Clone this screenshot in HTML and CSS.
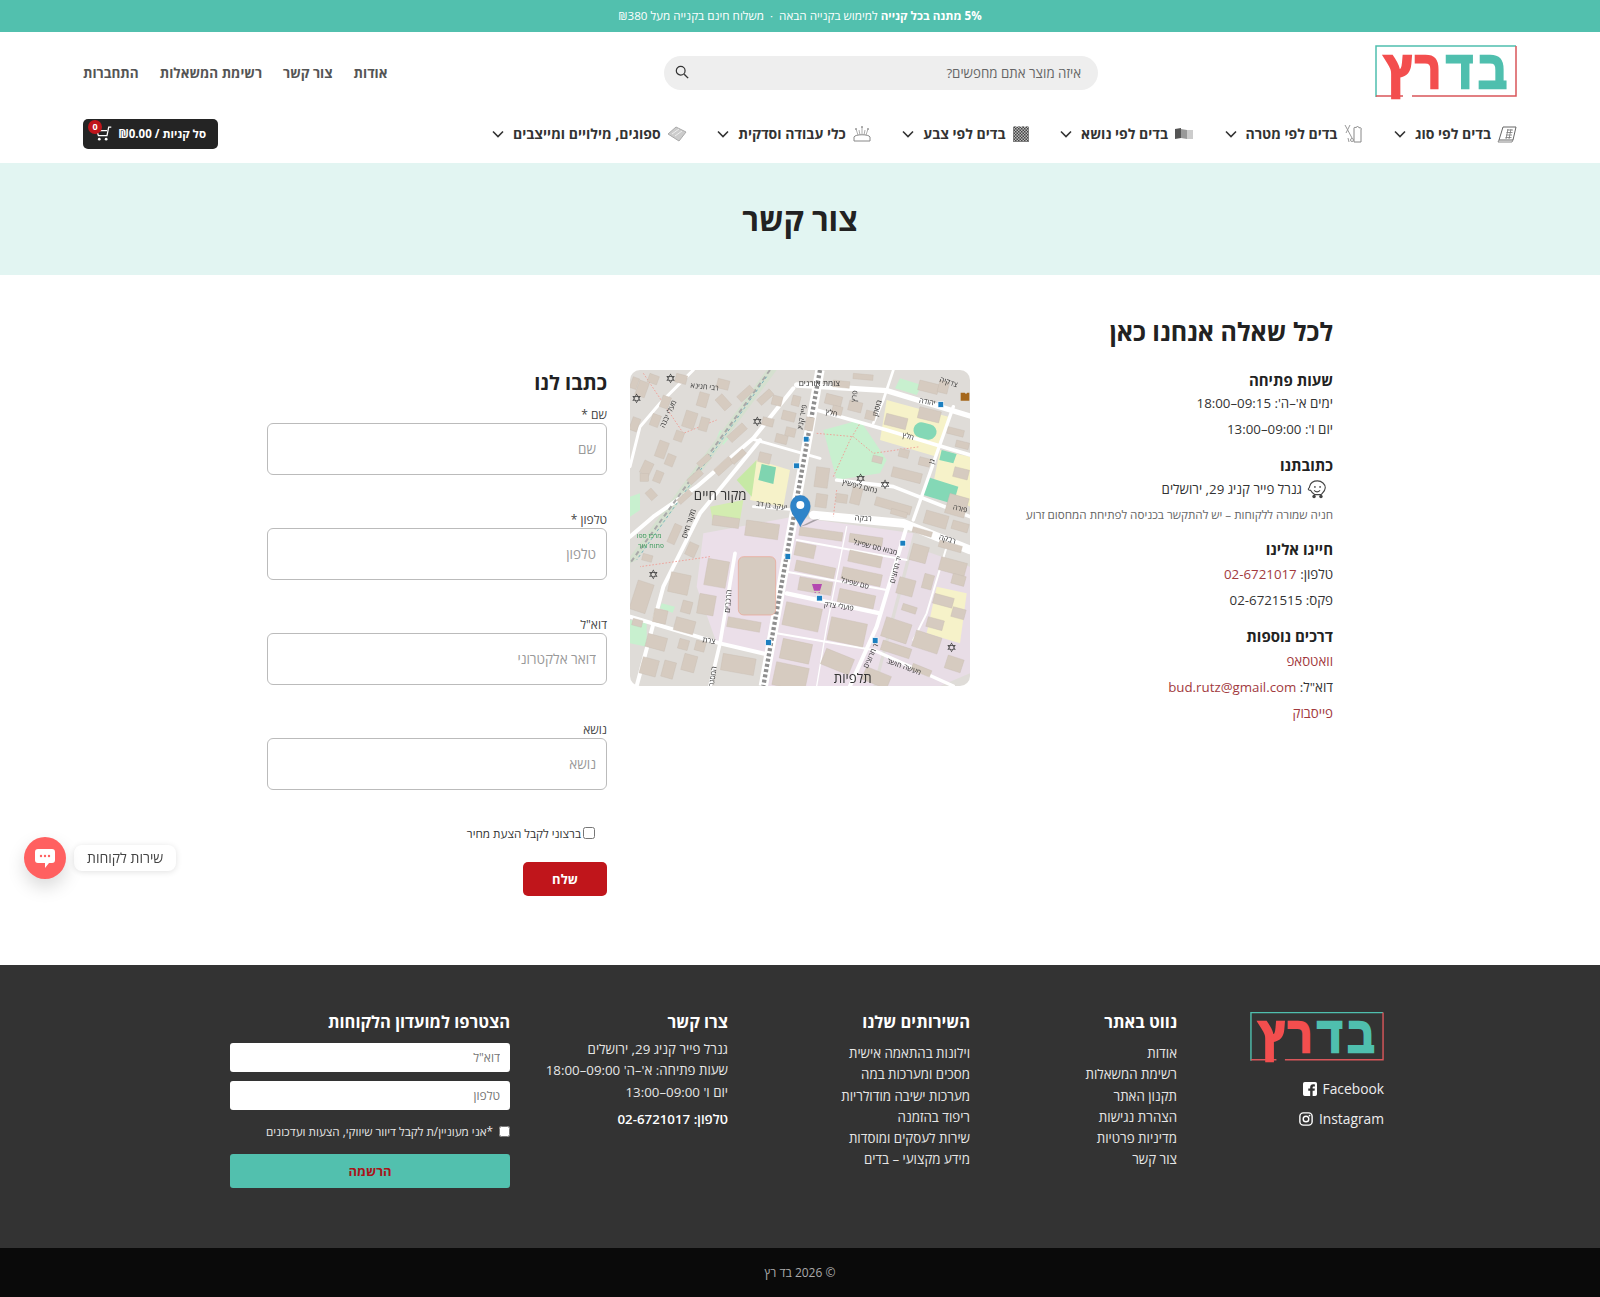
FILE: index.html
```html
<!DOCTYPE html>
<html lang="he" dir="rtl">
<head>
    <meta charset="UTF-8">
    <meta name="viewport" content="width=device-width, initial-scale=1.0">
    <title>צור קשר - בד רץ</title>
    <link rel="stylesheet" href="styles.css">
</head>
<body>
    <div class="topbar"><b>5% מתנה בכל קנייה</b> למימוש בקנייה הבאה &nbsp;·&nbsp; משלוח חינם בקנייה מעל ₪380</div>

    <header class="header">
        <div class="header-main">
            <a class="logo" href="#">
                <svg viewBox="0 -6 142 62" width="142" height="62">
                    <path d="M1 52V1H141" stroke="#4fbfae" stroke-width="1.500" fill="none"/>
                    <path d="M1 51H28M37 51H141V1" stroke="#d9565a" stroke-width="1.500" fill="none"/>
                    <g class="logo-word" font-size="52" stroke-width="2.600">
                        <text x="103" y="43" textLength="29" lengthAdjust="spacingAndGlyphs" fill="#4fbfae" stroke="#4fbfae">ב</text>
                        <text x="71" y="43" textLength="27" lengthAdjust="spacingAndGlyphs" fill="#4fbfae" stroke="#4fbfae">ד</text>
                        <text x="40" y="43" textLength="26" lengthAdjust="spacingAndGlyphs" fill="#f34e4e" stroke="#f34e4e">ר</text>
                        <text x="9" y="43" textLength="28" lengthAdjust="spacingAndGlyphs" fill="#f34e4e" stroke="#f34e4e">ץ</text>
                    </g>
                </svg>
            </a>
            <form class="search">
                <input class="search-input" type="text" placeholder="איזה מוצר אתם מחפשים?">
                <svg class="search-icon" viewBox="0 0 16 16" width="14" height="14"><circle cx="6.500" cy="6.500" r="5" fill="none" stroke="#333" stroke-width="1.400"/><path d="M10.500 10.500l4.500 4.500" stroke="#333" stroke-width="1.600"/></svg>
            </form>
            <nav class="top-links">
                <a href="#">אודות</a>
                <a href="#">צור קשר</a>
                <a href="#">רשימת המשאלות</a>
                <a href="#">התחברות</a>
            </nav>
        </div>
        <div class="header-nav">
            <nav class="cats">
                <a class="cat" href="#">
                    <svg viewBox="0 0 20 18" width="20" height="18"><path d="M6 2h13l-3 13H2z" fill="#fff" stroke="#666"/><path d="M2 15l-1 2h14l1-2" fill="none" stroke="#888"/><path d="M10 5h6M9.500 7.500h6M9 10h6M8.500 12.500h6M11 4l-2 10M14 4l-2 10" stroke="#777" stroke-width=".8"/></svg>
                    בדים לפי סוג
                    <svg class="chev" viewBox="0 0 12 8" width="12" height="8"><path d="M1 1.500l5 5 5-5" fill="none" stroke="#333" stroke-width="1.600"/></svg>
                </a>
                <a class="cat" href="#">
                    <svg viewBox="0 0 20 20" width="20" height="20"><path d="M11 9V4c0-1 2-1 2 0 0-2 3-2 3 0 1-1 3 0 2 2v12h-7z" fill="#fff" stroke="#888"/><path d="M2 1l7 13M7 1L3 9M5 14l1 4" fill="none" stroke="#999"/><circle cx="9" cy="16" r="1.500" fill="none" stroke="#999"/></svg>
                    בדים לפי מטרה
                    <svg class="chev" viewBox="0 0 12 8" width="12" height="8"><path d="M1 1.500l5 5 5-5" fill="none" stroke="#333" stroke-width="1.600"/></svg>
                </a>
                <a class="cat" href="#">
                    <svg viewBox="0 0 20 14" width="20" height="14"><path d="M1 2l6-1v10l-6 1z" fill="#555"/><path d="M7 2l6 1v9l-6-1z" fill="#999"/><path d="M13 3h6v9h-6z" fill="#ccc"/></svg>
                    בדים לפי נושא
                    <svg class="chev" viewBox="0 0 12 8" width="12" height="8"><path d="M1 1.500l5 5 5-5" fill="none" stroke="#333" stroke-width="1.600"/></svg>
                </a>
                <a class="cat" href="#">
                    <svg viewBox="0 0 18 18" width="18" height="18"><defs><pattern id="chk" width="3" height="3" patternUnits="userSpaceOnUse"><path d="M0 0h1.500v1.500H0zM1.500 1.500H3V3H1.500z" fill="#444"/></pattern></defs><path d="M1 2l2-1 2 1 2-1 2 1 2-1 2 1 2-1 2 1v15H1z" fill="#bbb"/><path d="M1 2l2-1 2 1 2-1 2 1 2-1 2 1 2-1 2 1v15H1z" fill="url(#chk)"/></svg>
                    בדים לפי צבע
                    <svg class="chev" viewBox="0 0 12 8" width="12" height="8"><path d="M1 1.500l5 5 5-5" fill="none" stroke="#333" stroke-width="1.600"/></svg>
                </a>
                <a class="cat" href="#">
                    <svg viewBox="0 0 20 18" width="20" height="18"><path d="M2 12c1-3 15-3 16 0v4H2z" fill="#fff" stroke="#888"/><path d="M6 10L4 4M10 9V2M14 10l2-6M8 10L7 5M12 10l1-5" stroke="#999" stroke-width=".8"/><circle cx="4" cy="4" r="1" fill="#999"/><circle cx="10" cy="2" r="1" fill="#999"/><circle cx="16" cy="4" r="1" fill="#999"/></svg>
                    כלי עבודה וסדקית
                    <svg class="chev" viewBox="0 0 12 8" width="12" height="8"><path d="M1 1.500l5 5 5-5" fill="none" stroke="#333" stroke-width="1.600"/></svg>
                </a>
                <a class="cat" href="#">
                    <svg viewBox="0 0 20 16" width="20" height="16"><path d="M1 8l8-7 10 5-7 9z" fill="#ccc" stroke="#aaa"/><path d="M5 8l7-5M8 10l7-5" stroke="#eee"/></svg>
                    ספוגים, מילויים ומייצבים
                    <svg class="chev" viewBox="0 0 12 8" width="12" height="8"><path d="M1 1.500l5 5 5-5" fill="none" stroke="#333" stroke-width="1.600"/></svg>
                </a>
            </nav>
            <a class="cart" href="#">
                <span class="cart-text">סל קניות / ₪0.00</span>
                <svg viewBox="0 0 20 18" width="18" height="16"><path d="M19 1h-3l-2 10H4L2 5h12" fill="none" stroke="#fff" stroke-width="1.500"/><circle cx="5" cy="15" r="1.600" fill="#fff"/><circle cx="13" cy="15" r="1.600" fill="#fff"/></svg>
                <i class="cart-count">0</i>
            </a>
        </div>
    </header>

    <section class="hero"><h1>צור קשר</h1></section>

    <main class="contact">
        <h2>לכל שאלה אנחנו כאן</h2>
        <div class="contact-grid">
            <div class="info">
                <h3>שעות פתיחה</h3>
                <p>ימים א'–ה': 09:15–18:00</p>
                <p>יום ו': 09:00–13:00</p>
                <h3>כתובתנו</h3>
                <p class="address">
                    <svg viewBox="0 0 24 22" width="21" height="19"><path d="M4 12c-2 0-3-1-2.500-2C3 9 3 8 3 7c1-4 5-6 9-6 5 0 9 4 9 8 0 4-3 6-5 8H9c-2-1-4-3-5-5z" fill="#fff" stroke="#444" stroke-width="1.300"/><circle cx="9" cy="8" r="1" fill="#444"/><circle cx="15" cy="8" r="1" fill="#444"/><path d="M8 12c2 2 5 2 7 0" fill="none" stroke="#444" stroke-width="1.200"/><circle cx="8" cy="19" r="2" fill="#444"/><circle cx="16" cy="19" r="2" fill="#444"/></svg>
                    גנרל פייר קניג 29, ירושלים
                </p>
                <p class="note">חניה שמורה ללקוחות – יש להתקשר בכניסה לפתיחת המחסום זרוע</p>
                <h3>חייגו אלינו</h3>
                <p>טלפון: <a href="#">02-6721017</a></p>
                <p>פקס: 02-6721515</p>
                <h3>דרכים נוספות</h3>
                <p><a href="#">וואטסאפ</a></p>
                <p>דוא"ל: <a href="#">bud.rutz@gmail.com</a></p>
                <p><a href="#">פייסבוק</a></p>
            </div>

            <div class="map">
                <svg viewBox="30 30 1020 948" width="340" height="316" preserveAspectRatio="none">
                    <rect x="30" y="30" width="1020" height="948" fill="#dfdcd8"/>
                    <!-- land use -->
                    <path d="M250 520L520 470 880 520 760 978H440L430 880 290 850 230 680z" fill="#ebdfe9"/>
                    <path d="M880 560L1050 620V940L960 978H770z" fill="#e8dde6"/>
                    <path d="M800 120L985 170 950 290 780 240z" fill="#f6f2c9"/>
                    <path d="M410 300L510 330 490 440 390 420z" fill="#f6f2c9"/>
                    <path d="M950 680L1040 700 1020 850 920 820z" fill="#f6f2c9"/>
                    <path d="M960 270L1050 290V440L940 370z" fill="#f6f2c9"/>
                    <path d="M610 210L720 180 800 300 780 340 650 360z" fill="#c8f0cf"/>
                    <path d="M350 360L410 300 395 410z" fill="#c6e9a5"/>
                    <path d="M270 440L370 420 360 480 280 490z" fill="#d3ecb0"/>
                    <path d="M30 780L80 790V860L30 850z" fill="#c8f0cf"/>
                    <path d="M30 410L60 400V450L30 470z" fill="#c8f0cf"/>
                    <path d="M300 210L335 225 310 255 290 235z" fill="#c8f0cf"/>
                    <path d="M425 312L468 322 460 372 415 360z" fill="#7fd4b0"/>
                    <rect x="880" y="190" width="70" height="46" rx="23" fill="#84d8b6" transform="rotate(14 915 213)"/>
                    <path d="M965 270L1010 282 1000 310 958 300z" fill="#84d8b6"/>
                    <path d="M925 352L1015 380 1000 432 910 405z" fill="#84d8b6"/>
                    <path d="M840 55L905 75 890 105 825 85z" fill="#c8f0cf"/>
                    <path d="M125 730L165 740 158 758 120 745z" fill="#c8f0cf"/>
                    <!-- strip along the old railway -->
                    <path d="M440 30H470L50 600 30 610V590z" fill="#d5e0cf"/>
                    <!-- roads -->
                    <g fill="none" stroke="#fff" stroke-linecap="round" stroke-linejoin="round">
                        <path d="M530 75L800 92 1050 168" stroke-width="16"/>
                        <path d="M590 150L800 210 1050 285" stroke-width="11"/>
                        <path d="M400 238L600 295" stroke-width="9"/>
                        <path d="M650 360L820 380 1050 470" stroke-width="11"/>
                        <path d="M520 85L400 235 230 380 100 470 30 530" stroke-width="12"/>
                        <path d="M220 30L120 130 60 200 30 320" stroke-width="9"/>
                        <path d="M420 240L240 460 130 680 50 978" stroke-width="12"/>
                        <path d="M30 770L300 850 450 885" stroke-width="12"/>
                        <path d="M500 700L780 760" stroke-width="13"/>
                        <path d="M500 635L800 690" stroke-width="6"/>
                        <path d="M530 540L860 600" stroke-width="6"/>
                        <path d="M760 870L1000 978" stroke-width="10"/>
                        <path d="M470 820L760 870" stroke-width="6"/>
                        <path d="M860 500L770 800 690 978" stroke-width="12"/>
                        <path d="M1000 140L880 480" stroke-width="10"/>
                        <path d="M820 30L790 120 760 190" stroke-width="8"/>
                        <path d="M345 580L300 850 270 978" stroke-width="11"/>
                        <path d="M400 440L530 450" stroke-width="8"/>
                        <path d="M580 465L850 490 1050 570" stroke-width="26"/>
                        <path d="M980 560L920 760 880 840" stroke-width="6"/>
                        <path d="M600 30L430 978" stroke-width="28" stroke-linecap="butt"/>
                        <path d="M680 500L620 800 590 978" stroke-width="4"/>
                    </g>
                    <path d="M600 30L430 978" fill="none" stroke="#8f8f8f" stroke-width="13" stroke-dasharray="9 7"/>
                    <path d="M450 30L30 610" fill="none" stroke="#a9a9a9" stroke-width="6" stroke-dasharray="14 10"/>
                    <path d="M440 50L50 600" fill="none" stroke="#4a9bb0" stroke-width="2" stroke-dasharray="8 8"/>
                    <g fill="none" stroke="#f0978f" stroke-width="2.500" stroke-dasharray="5 5">
                        <path d="M590 220L700 230 760 280 900 260"/>
                        <path d="M640 350L690 240 720 190"/>
                        <path d="M650 390L640 470"/>
                        <path d="M270 590L60 620"/>
                        <path d="M70 40L190 220 290 180"/>
                    </g>
                    <!-- buildings -->
                    <g fill="#d6cbc0" stroke="#c6bbaf" stroke-width="1">
                        <rect x="295" y="55" width="36" height="28" transform="rotate(14 295 55)"/>
                        <rect x="60" y="60" width="30" height="46" transform="rotate(20 60 60)"/>
                        <rect x="200" y="150" width="36" height="50" transform="rotate(18 200 150)"/>
                        <rect x="120" y="240" width="30" height="50" transform="rotate(20 120 240)"/>
                        <rect x="75" y="300" width="30" height="40" transform="rotate(25 75 300)"/>
                        <rect x="60" y="340" width="26" height="24"/>
                        <rect x="320" y="230" width="62" height="24" transform="rotate(-42 320 230)"/>
                        <rect x="280" y="330" width="62" height="24" transform="rotate(-42 280 330)"/>
                        <rect x="200" y="360" width="50" height="20" transform="rotate(-42 200 360)"/>
                        <rect x="350" y="110" width="52" height="22" transform="rotate(-42 350 110)"/>
                        <rect x="410" y="120" width="50" height="22" transform="rotate(-42 410 120)"/>
                        <rect x="490" y="150" width="40" height="28" transform="rotate(14 490 150)"/>
                        <rect x="470" y="220" width="36" height="26" transform="rotate(14 470 220)"/>
                        <rect x="420" y="275" width="36" height="30" transform="rotate(14 420 275)"/>
                        <rect x="620" y="100" width="50" height="30" transform="rotate(14 620 100)"/>
                        <rect x="690" y="120" width="40" height="30" transform="rotate(14 690 120)"/>
                        <rect x="800" y="160" width="66" height="34" transform="rotate(14 800 160)"/>
                        <rect x="900" y="140" width="66" height="34" transform="rotate(14 900 140)"/>
                        <rect x="590" y="320" width="40" height="60" transform="rotate(8 590 320)"/>
                        <rect x="590" y="400" width="34" height="40" transform="rotate(8 590 400)"/>
                        <rect x="700" y="380" width="30" height="50" transform="rotate(14 700 380)"/>
                        <rect x="770" y="410" width="110" height="26" transform="rotate(16 770 410)"/>
                        <rect x="920" y="450" width="70" height="40" transform="rotate(16 920 450)"/>
                        <rect x="820" y="320" width="90" height="30" transform="rotate(14 820 320)"/>
                        <rect x="380" y="480" width="100" height="46" transform="rotate(8 380 480)"/>
                        <rect x="540" y="500" width="130" height="26" transform="rotate(8 540 500)"/>
                        <rect x="690" y="520" width="100" height="26" transform="rotate(8 690 520)"/>
                        <rect x="530" y="545" width="60" height="40" transform="rotate(12 530 545)"/>
                        <rect x="690" y="570" width="100" height="34" transform="rotate(12 690 570)"/>
                        <rect x="530" y="600" width="120" height="32" transform="rotate(12 530 600)"/>
                        <rect x="670" y="620" width="120" height="36" transform="rotate(12 670 620)"/>
                        <rect x="540" y="650" width="100" height="40" transform="rotate(10 540 650)"/>
                        <rect x="660" y="685" width="110" height="40" transform="rotate(12 660 685)"/>
                        <rect x="500" y="725" width="110" height="70" transform="rotate(12 500 725)"/>
                        <rect x="635" y="770" width="110" height="70" transform="rotate(12 635 770)"/>
                        <rect x="490" y="835" width="90" height="60" transform="rotate(12 490 835)"/>
                        <rect x="620" y="865" width="90" height="50" transform="rotate(22 620 865)"/>
                        <rect x="470" y="905" width="100" height="70" transform="rotate(12 470 905)"/>
                        <rect x="355" y="590" width="112" height="175" rx="16" stroke="#eca18f" stroke-width="2"/>
                        <rect x="265" y="595" width="65" height="80" transform="rotate(10 265 595)"/>
                        <rect x="240" y="700" width="50" height="60" transform="rotate(10 240 700)"/>
                        <rect x="325" y="770" width="100" height="30" transform="rotate(10 325 770)"/>
                        <rect x="310" y="880" width="100" height="50" transform="rotate(10 310 880)"/>
                        <rect x="155" y="635" width="60" height="60" transform="rotate(12 155 635)"/>
                        <rect x="105" y="745" width="40" height="40" transform="rotate(12 105 745)"/>
                        <rect x="170" y="770" width="60" height="40" transform="rotate(15 170 770)"/>
                        <rect x="55" y="660" width="50" height="90" transform="rotate(18 55 660)"/>
                        <rect x="280" y="465" width="80" height="30" transform="rotate(8 280 465)"/>
                        <rect x="85" y="820" width="60" height="40" transform="rotate(15 85 820)"/>
                        <rect x="70" y="890" width="50" height="50" transform="rotate(15 70 890)"/>
                        <rect x="880" y="550" width="50" height="50" transform="rotate(15 880 550)"/>
                        <rect x="840" y="650" width="50" height="50" transform="rotate(15 840 650)"/>
                        <rect x="800" y="770" width="80" height="60" transform="rotate(18 800 770)"/>
                        <rect x="790" y="840" width="90" height="30" transform="rotate(18 790 840)"/>
                        <rect x="890" y="810" width="80" height="50" transform="rotate(18 890 810)"/>
                        <rect x="965" y="590" width="80" height="40" transform="rotate(15 965 590)"/>
                        <rect x="945" y="700" width="60" height="30" transform="rotate(15 945 700)"/>
                        <rect x="925" y="770" width="50" height="30" transform="rotate(15 925 770)"/>
                        <rect x="740" y="920" width="80" height="40" transform="rotate(22 740 920)"/>
                        <rect x="990" y="400" width="60" height="60" transform="rotate(16 990 400)"/>
                        <rect x="900" y="60" width="60" height="30" transform="rotate(14 900 60)"/>
                        <!-- second pass, the dense blocks -->
                        <rect x="130" y="105" width="26" height="36" transform="rotate(20 130 105)"/>
                        <rect x="100" y="160" width="26" height="36" transform="rotate(20 100 160)"/>
                        <rect x="240" y="95" width="30" height="42" transform="rotate(16 240 95)"/>
                        <rect x="285" y="120" width="28" height="44" transform="rotate(-42 285 120)"/>
                        <rect x="245" y="170" width="26" height="40" transform="rotate(16 245 170)"/>
                        <rect x="145" y="280" width="26" height="34" transform="rotate(22 145 280)"/>
                        <rect x="110" y="330" width="24" height="34" transform="rotate(22 110 330)"/>
                        <rect x="330" y="300" width="50" height="18" transform="rotate(-42 330 300)"/>
                        <rect x="170" y="420" width="48" height="18" transform="rotate(-42 170 420)"/>
                        <rect x="230" y="310" width="44" height="18" transform="rotate(-42 230 310)"/>
                        <rect x="460" y="105" width="30" height="28" transform="rotate(14 460 105)"/>
                        <rect x="520" y="105" width="24" height="30" transform="rotate(14 520 105)"/>
                        <rect x="430" y="170" width="34" height="24" transform="rotate(14 430 170)"/>
                        <rect x="500" y="200" width="30" height="26" transform="rotate(14 500 200)"/>
                        <rect x="700" y="40" width="60" height="16" transform="rotate(5 700 40)"/>
                        <rect x="640" y="135" width="30" height="26" transform="rotate(14 640 135)"/>
                        <rect x="740" y="150" width="30" height="26" transform="rotate(14 740 150)"/>
                        <rect x="840" y="265" width="30" height="24" transform="rotate(14 840 265)"/>
                        <rect x="900" y="290" width="34" height="24" transform="rotate(14 900 290)"/>
                        <rect x="1000" y="480" width="50" height="26" transform="rotate(16 1000 480)"/>
                        <rect x="960" y="60" width="30" height="36" transform="rotate(14 960 60)"/>
                        <rect x="1005" y="320" width="45" height="30" transform="rotate(14 1005 320)"/>
                        <rect x="650" y="400" width="34" height="26" transform="rotate(8 650 400)"/>
                        <rect x="815" y="445" width="50" height="16" transform="rotate(16 815 445)"/>
                        <rect x="915" y="640" width="30" height="44" transform="rotate(15 915 640)"/>
                        <rect x="1000" y="640" width="40" height="30" transform="rotate(15 1000 640)"/>
                        <rect x="985" y="885" width="50" height="40" transform="rotate(18 985 885)"/>
                        <rect x="230" y="840" width="30" height="30" transform="rotate(15 230 840)"/>
                        <rect x="195" y="880" width="40" height="50" transform="rotate(15 195 880)"/>
                        <rect x="135" y="900" width="36" height="50" transform="rotate(15 135 900)"/>
                        <rect x="190" y="720" width="30" height="36" transform="rotate(15 190 720)"/>
                        <!-- third pass -->
                        <rect x="40" y="50" width="20" height="34" transform="rotate(20 40 50)"/>
                        <rect x="90" y="40" width="30" height="26" transform="rotate(20 90 40)"/>
                        <rect x="170" y="40" width="34" height="26" transform="rotate(14 170 40)"/>
                        <rect x="40" y="170" width="24" height="40" transform="rotate(20 40 170)"/>
                        <rect x="170" y="210" width="26" height="30" transform="rotate(20 170 210)"/>
                        <rect x="75" y="400" width="24" height="30" transform="rotate(-42 75 400)"/>
                        <rect x="165" y="490" width="24" height="60" transform="rotate(24 165 490)"/>
                        <rect x="210" y="545" width="30" height="40" transform="rotate(24 210 545)"/>
                        <rect x="70" y="580" width="30" height="20" transform="rotate(15 70 580)"/>
                        <rect x="180" y="835" width="30" height="30" transform="rotate(15 180 835)"/>
                        <rect x="40" y="775" width="30" height="20" transform="rotate(15 40 775)"/>
                        <rect x="640" y="60" width="50" height="20" transform="rotate(6 640 60)" fill="#d6cbc0"/>
                        <rect x="560" y="170" width="24" height="40" transform="rotate(10 560 170)"/>
                        <rect x="985" y="200" width="50" height="20" transform="rotate(14 985 200)"/>
                        <rect x="1010" y="240" width="40" height="20" transform="rotate(14 1010 240)"/>
                        <rect x="760" y="285" width="30" height="20" transform="rotate(14 760 285)"/>
                        <rect x="880" y="500" width="60" height="16" transform="rotate(16 880 500)"/>
                        <rect x="960" y="540" width="70" height="20" transform="rotate(16 960 540)"/>
                        <rect x="1000" y="740" width="40" height="30" transform="rotate(15 1000 740)"/>
                        <rect x="850" y="730" width="44" height="20" transform="rotate(18 850 730)"/>
                        <rect x="880" y="910" width="60" height="20" transform="rotate(22 880 910)"/>
                    </g>
                    <!-- labels -->
                    <g class="map-labels">
                        <text x="660" y="78" font-size="25">צומת אורנים</text>
                        <text x="650" y="170" font-size="22" transform="rotate(14 650 170)">חלץ</text>
                        <text x="880" y="240" font-size="22" transform="rotate(14 880 240)">חלץ</text>
                        <text x="945" y="137" font-size="22" transform="rotate(10 945 137)">יהודה</text>
                        <text x="295" y="92" font-size="22" transform="rotate(6 295 92)">רבי חנינא</text>
                        <text x="170" y="125" font-size="22" transform="rotate(-65 170 125)">מעלי יבנה</text>
                        <text x="380" y="420" font-size="40" fill="#666">מקור חיים</text>
                        <text x="500" y="450" font-size="22" transform="rotate(8 500 450)">יעקב בן דב</text>
                        <text x="770" y="400" font-size="22" transform="rotate(15 770 400)">נחום ליפשיץ</text>
                        <text x="755" y="484" font-size="23" transform="rotate(4 755 484)">רבקה</text>
                        <text x="1005" y="552" font-size="23" transform="rotate(16 1005 552)">רבקה</text>
                        <text x="830" y="585" font-size="22" transform="rotate(14 830 585)">מבוא סם שפיגל</text>
                        <text x="745" y="687" font-size="22" transform="rotate(14 745 687)">סם שפיגל</text>
                        <text x="700" y="752" font-size="22" transform="rotate(8 700 752)">פועלי צדק</text>
                        <text x="228" y="450" font-size="23" transform="rotate(-72 228 450)">מקור חיים</text>
                        <text x="125" y="535" font-size="21" class="map-green">מרכז ספו</text>
                        <text x="132" y="563" font-size="21" class="map-green">פתוח אור</text>
                        <text x="335" y="690" font-size="23" transform="rotate(-85 335 690)">הרכבים</text>
                        <text x="285" y="852" font-size="23" transform="rotate(8 285 852)">צרת</text>
                        <text x="900" y="945" font-size="22" transform="rotate(20 900 945)">מעשה חושב</text>
                        <text x="755" y="968" font-size="40" fill="#666">תלפיות</text>
                        <text x="845" y="590" font-size="22" transform="rotate(-75 845 590)">יד חרוצים</text>
                        <text x="778" y="850" font-size="22" transform="rotate(-65 778 850)">יד חרוצים</text>
                        <text x="1040" y="458" font-size="22" transform="rotate(14 1040 458)">פורה</text>
                        <text x="1010" y="82" font-size="22" transform="rotate(18 1010 82)">צדקיה</text>
                        <text x="712" y="92" font-size="22" transform="rotate(-85 712 92)">פרץ</text>
                        <text x="785" y="122" font-size="22" transform="rotate(-75 785 122)">בוסתן</text>
                        <text x="560" y="135" font-size="22" transform="rotate(-80 560 135)">פייר קניג</text>
                        <text x="290" y="920" font-size="22" transform="rotate(-82 290 920)">המסגר</text>
                        <text x="945" y="300" font-size="22" transform="rotate(-70 945 300)">גן</text>
                    </g>
                    <!-- place markers -->
                    <g class="map-stars" font-size="38" fill="#3a3a3a" text-anchor="middle">
                        <text x="152" y="68">✡</text>
                        <text x="50" y="130">✡</text>
                        <text x="412" y="198">✡</text>
                        <text x="722" y="368">✡</text>
                        <text x="795" y="388">✡</text>
                        <text x="100" y="658">✡</text>
                        <text x="995" y="875">✡</text>
                    </g>
                    <g fill="#1c7fc0" stroke="#fff" stroke-width="2">
                        <rect x="954" y="125" width="17" height="17"/>
                        <rect x="550" y="229" width="17" height="17"/>
                        <rect x="521" y="309" width="17" height="17"/>
                        <rect x="840" y="541" width="17" height="17"/>
                        <rect x="495" y="581" width="17" height="17"/>
                        <rect x="590" y="706" width="17" height="17"/>
                        <rect x="757" y="833" width="17" height="17"/>
                        <rect x="437" y="839" width="17" height="17"/>
                    </g>
                    <path d="M1022 98h12l4 4 4-4h6v24h-26z" fill="#a5671b"/>
                    <path d="M576 672h30l-6 20h-18zM584 696h3v3h-3zM596 696h3v3h-3z" fill="#b449b0"/>
                    <path d="M540 500L580 480 600 476 560 495z" fill="#555" opacity=".45"/>
                    <path d="M541 500c-10-24-30-38-30-62a30 32 0 0 1 60 0c0 24-20 38-30 62z" fill="#2f84c9" stroke="#2a6fa8" stroke-width="1"/>
                    <circle cx="541" cy="435" r="12" fill="#fff"/>
                </svg>
            </div>

            <form class="contact-form">
                <h3 class="form-title">כתבו לנו</h3>
                <div class="field">
                    <label>שם *</label>
                    <input type="text" placeholder="שם">
                </div>
                <div class="field">
                    <label>טלפון *</label>
                    <input type="text" placeholder="טלפון">
                </div>
                <div class="field">
                    <label>דוא"ל</label>
                    <input type="text" placeholder="דואר אלקטרוני">
                </div>
                <div class="field">
                    <label>נושא</label>
                    <input type="text" placeholder="נושא">
                </div>
                <label class="check"><input type="checkbox"> ברצוני לקבל הצעת מחיר</label>
                <button class="send" type="button">שלח</button>
            </form>
        </div>
    </main>

    <footer class="footer">
        <div class="footer-cols">
            <div class="footer-brand">
                <svg viewBox="0 -6 142 62" width="134" height="58.500">
                    <path d="M1 52V1H141" stroke="#4fbfae" stroke-width="1.500" fill="none"/>
                    <path d="M1 51H28M37 51H141V1" stroke="#d9565a" stroke-width="1.500" fill="none"/>
                    <g class="logo-word" font-size="52" stroke-width="2.600">
                        <text x="103" y="43" textLength="29" lengthAdjust="spacingAndGlyphs" fill="#4fbfae" stroke="#4fbfae">ב</text>
                        <text x="71" y="43" textLength="27" lengthAdjust="spacingAndGlyphs" fill="#4fbfae" stroke="#4fbfae">ד</text>
                        <text x="40" y="43" textLength="26" lengthAdjust="spacingAndGlyphs" fill="#f34e4e" stroke="#f34e4e">ר</text>
                        <text x="9" y="43" textLength="28" lengthAdjust="spacingAndGlyphs" fill="#f34e4e" stroke="#f34e4e">ץ</text>
                    </g>
                </svg>
                <a class="social" href="#">
                    <svg viewBox="0 0 16 16" width="14" height="14"><path d="M2 0h12a2 2 0 0 1 2 2v12a2 2 0 0 1-2 2h-3v-6h2.200l.4-2.500H11V6.300c0-.8.4-1.300 1.300-1.300h1.300V2.800c-.6-.1-1.300-.2-2-.2-2.100 0-3.400 1.200-3.400 3.400v1.500H6V10h2.200v6H2a2 2 0 0 1-2-2V2a2 2 0 0 1 2-2z" fill="#fff"/></svg>
                    <span>Facebook</span>
                </a>
                <a class="social" href="#">
                    <svg viewBox="0 0 16 16" width="14" height="14"><rect x="1" y="1" width="14" height="14" rx="4" fill="none" stroke="#fff" stroke-width="1.600"/><circle cx="8" cy="8" r="3.200" fill="none" stroke="#fff" stroke-width="1.600"/><circle cx="12" cy="4" r="1" fill="#fff"/></svg>
                    <span>Instagram</span>
                </a>
            </div>
            <div class="footer-col">
                <h4>נווט באתר</h4>
                <a href="#">אודות</a>
                <a href="#">רשימת המשאלות</a>
                <a href="#">תקנון האתר</a>
                <a href="#">הצהרת נגישות</a>
                <a href="#">מדיניות פרטיות</a>
                <a href="#">צור קשר</a>
            </div>
            <div class="footer-col">
                <h4>השירותים שלנו</h4>
                <a href="#">וילונות בהתאמה אישית</a>
                <a href="#">מסכים ומערכות במה</a>
                <a href="#">מערכות ישיבה מודולריות</a>
                <a href="#">ריפוד בהזמנה</a>
                <a href="#">שירות לעסקים ומוסדות</a>
                <a href="#">מידע מקצועי – בדים</a>
            </div>
            <div class="footer-contact">
                <h4>צרו קשר</h4>
                <p>גנרל פייר קניג 29, ירושלים</p>
                <p>שעות פתיחה: א'–ה' 09:00–18:00</p>
                <p>יום ו' 09:00–13:00</p>
                <p class="footer-phone">טלפון: 02-6721017</p>
            </div>
            <form class="footer-join">
                <h4>הצטרפו למועדון הלקוחות</h4>
                <input type="text" placeholder='דוא"ל'>
                <input type="text" placeholder="טלפון">
                <label class="footer-check"><input type="checkbox"> *אני מעוניין/ת לקבל דיוור שיווקי, הצעות ועדכונים</label>
                <button class="join" type="button">הרשמה</button>
            </form>
        </div>
    </footer>
    <div class="copyright">© 2026 בד רץ</div>

    <div class="chat">
        <span class="chat-label">שירות לקוחות</span>
        <span class="chat-btn">
            <svg viewBox="0 0 24 24" width="24" height="24"><path d="M5 3h14a3 3 0 0 1 3 3v8a3 3 0 0 1-3 3h-3l-4 5v-5H5a3 3 0 0 1-3-3V6a3 3 0 0 1 3-3z" fill="#fff"/><circle cx="8" cy="10" r="1.200" fill="#ff6060"/><circle cx="12" cy="10" r="1.200" fill="#ff6060"/><circle cx="16" cy="10" r="1.200" fill="#ff6060"/></svg>
        </span>
    </div>
</body>
</html>
```

FILE: styles.css
```css
* {
    box-sizing: border-box;
}
body {
    margin: 0;
    font-family: "Open Sans", "Noto Sans", "Liberation Sans", sans-serif;
    font-size: 14px;
    color: #333;
    background: #fff;
}
a {
    color: inherit;
    text-decoration: none;
}
.topbar {
    height: 32px;
    line-height: 32px;
    background: #52c0ae;
    color: #fff;
    font-size: 11.650px;
    text-align: center;
}

/* header */
.header {
    padding: 0 83px;
    height: 131px;
}
.header-main {
    display: flex;
    align-items: center;
    padding-top: 7px;
    height: 75px;
}
.logo {
    display: block;
    width: 142px;
    height: 56px;
}
.logo svg {
    display: block;
    margin-top: -6px;
}
.logo-word text {
    font-family: "Liberation Sans", sans-serif;
    font-weight: 700;
    direction: ltr;
}
.search {
    position: relative;
    width: 434px;
    margin-right: 277px;
}
.search-input {
    width: 100%;
    height: 34px;
    border: none;
    border-radius: 17px;
    background: #eee;
    padding: 0 17px 0 40px;
    font: 13.300px "Open Sans", sans-serif;
}
.search-input::placeholder {
    color: #666;
}
.search-icon {
    position: absolute;
    left: 11px;
    top: 9px;
}
.top-links {
    display: flex;
    gap: 21px;
    margin-right: auto;
    font-size: 13.500px;
    font-weight: 700;
    color: #555;
}
.header-nav {
    display: flex;
    align-items: center;
    justify-content: space-between;
    height: 53px;
}
.cats {
    display: flex;
    gap: 30.500px;
}
.cat {
    display: flex;
    align-items: center;
    gap: 6px;
    font-size: 14px;
    font-weight: 700;
    color: #333;
}
.chev {
    margin-right: 3px;
}
.cart {
    position: relative;
    display: flex;
    align-items: center;
    gap: 6px;
    width: 135px;
    height: 30px;
    padding: 0 12px;
    border-radius: 5px;
    background: #242424;
    color: #fff;
    font-size: 11.500px;
    font-weight: 700;
}
.cart-text {
    white-space: nowrap;
}
.cart-count {
    position: absolute;
    left: 5px;
    top: 1px;
    width: 14px;
    height: 14px;
    border-radius: 50%;
    background: #c0151b;
    font-size: 9px;
    font-style: normal;
    line-height: 14px;
    text-align: center;
}

/* page title */
.hero {
    height: 112px;
    background: #e2f5f2;
    display: flex;
    align-items: center;
    justify-content: center;
}
.hero h1 {
    margin: 0 0 2px;
    font-size: 31.500px;
    font-weight: 700;
    color: #222;
}

/* contact */
.contact {
    width: 1066px;
    margin: 0 auto;
    height: 690px;
    padding-top: 38px;
}
.contact h2 {
    margin: 0 0 21px;
    font-size: 25px;
    line-height: 36px;
    font-weight: 700;
    color: #222;
}
.contact-grid {
    display: grid;
    grid-template-columns: 340px 340px 340px;
    gap: 23px;
}
.info h3 {
    margin: 0 0 1.700px;
    font-size: 15px;
    line-height: 20px;
    font-weight: 700;
    color: #222;
}
.info h3:first-child {
    margin-bottom: -0.300px;
}
.info p {
    margin: 0;
    font-size: 13.300px;
    line-height: 26px;
}
.info p + h3 {
    margin-top: 13px;
}
.info .note + h3 {
    margin-top: 11px;
}
.info a {
    color: #a23a3e;
}
.address {
    display: flex;
    align-items: center;
    gap: 5px;
    padding-right: 5px;
}
.info .note {
    font-size: 11.650px;
    color: #666;
}
.map {
    height: 316px;
    border-radius: 10px;
    overflow: hidden;
}
.map svg {
    display: block;
    filter: blur(0.3px);
}
.map-labels text {
    font-family: "Open Sans", sans-serif;
    fill: #333;
}
.map-labels .map-green {
    fill: #3a9a5a;
}
.map-stars text {
    font-family: "DejaVu Sans", sans-serif;
}
.contact-form .form-title {
    margin: 0 0 10px;
    font-size: 20px;
    line-height: 26px;
    font-weight: 700;
    color: #222;
}
.field {
    height: 105px;
}
.field label {
    display: block;
    font-size: 12px;
    line-height: 17px;
    color: #444;
}
.field input {
    width: 100%;
    height: 52px;
    border: 1px solid #bbb;
    border-radius: 6px;
    padding: 0 10px;
    font: 13.500px "Open Sans", sans-serif;
    background: #fff;
}
.field input::placeholder {
    color: #999;
}
.check {
    display: flex;
    align-items: center;
    gap: 2px;
    margin-top: -1px;
    padding-right: 12px;
    font-size: 11.700px;
    color: #333;
}
.check input {
    margin: 0;
    width: 12px;
    height: 12px;
}
.send {
    display: block;
    margin-top: 21px;
    width: 84px;
    height: 34px;
    border: none;
    border-radius: 5px;
    background: #c0151b;
    color: #fff;
    font: 700 13px "Open Sans", sans-serif;
}

/* footer */
.footer {
    height: 283px;
    background: #333;
    color: #e6e6e6;
    padding: 44px 0 0 14px;
}
.footer-cols {
    display: grid;
    grid-template-columns: 207px 207px 242px 218px 280px;
    width: 1154px;
    margin: 0 auto;
}
.footer h4 {
    margin: 0 0 8px;
    font-size: 16.500px;
    line-height: 26px;
    font-weight: 700;
    color: #fff;
}
.footer-brand svg {
    display: block;
}
.footer-brand > svg {
    margin-top: -3px;
}
.social {
    display: flex;
    align-items: center;
    justify-content: flex-end;
    gap: 6px;
    direction: ltr;
    font-size: 13.800px;
    line-height: 30px;
    color: #eee;
}
.footer-brand svg + .social {
    margin-top: 9px;
}
.footer-col a {
    display: block;
    font-size: 13.300px;
    line-height: 21.300px;
}
.footer .footer-contact h4 {
    margin-bottom: 4px;
}
.footer-contact p {
    margin: 0;
    font-size: 13.300px;
    line-height: 21.300px;
}
.footer-contact .footer-phone {
    margin-top: 6px;
    color: #fff;
    font-weight: 600;
}
.footer-join input[type="text"] {
    display: block;
    width: 280px;
    height: 29px;
    margin-bottom: 9px;
    border: none;
    border-radius: 3px;
    padding: 0 10px;
    font: 12px "Open Sans", sans-serif;
    background: #fff;
}
.footer-check {
    display: flex;
    align-items: center;
    gap: 6px;
    font-size: 11.700px;
    line-height: 18px;
    margin-top: 12px;
}
.footer-check input {
    margin: 0;
    width: 11px;
    height: 11px;
}
.join {
    display: block;
    width: 280px;
    height: 34px;
    margin-top: 14px;
    border: none;
    border-radius: 3px;
    background: #52c0ae;
    color: #a8151b;
    font: 700 13px "Open Sans", sans-serif;
}
.copyright {
    height: 49px;
    line-height: 49px;
    background: #0a0a0a;
    color: #aaa;
    font-size: 12px;
    text-align: center;
}

/* floating chat */
.chat {
    position: fixed;
    left: 24px;
    top: 837px;
    display: flex;
    align-items: center;
    gap: 8px;
}
.chat-btn {
    display: flex;
    align-items: center;
    justify-content: center;
    width: 42px;
    height: 42px;
    border-radius: 50%;
    background: #ff6060;
    box-shadow: 0 8px 18px rgba(0,0,0,0.15);
}
.chat-label {
    padding: 0 13px;
    height: 26px;
    line-height: 26px;
    border-radius: 8px;
    background: #fff;
    font-size: 14px;
    color: #444;
    box-shadow: 0 1px 6px rgba(0,0,0,0.12);
}
```
